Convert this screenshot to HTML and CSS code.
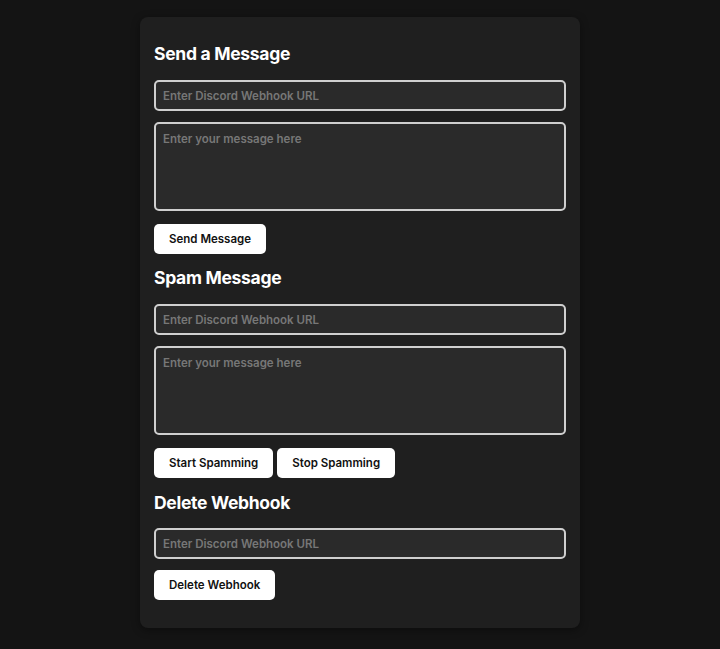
FILE: index.html
```html
<!DOCTYPE html>
<html lang="en">
<head>
<meta charset="utf-8">
<title>Discord Webhook Tool</title>
<link rel="stylesheet" href="styles.css">
</head>
<body>
<div class="card">
  <section class="section">
    <h2 class="title">Send a Message</h2>
    <input class="field" type="text" placeholder="Enter Discord Webhook URL">
    <textarea class="area" placeholder="Enter your message here"></textarea>
    <div class="actions">
      <button class="btn">Send Message</button>
    </div>
  </section>
  <section class="section">
    <h2 class="title">Spam Message</h2>
    <input class="field" type="text" placeholder="Enter Discord Webhook URL">
    <textarea class="area" placeholder="Enter your message here"></textarea>
    <div class="actions">
      <button class="btn">Start Spamming</button>
      <button class="btn">Stop Spamming</button>
    </div>
  </section>
  <section class="section">
    <h2 class="title">Delete Webhook</h2>
    <input class="field" type="text" placeholder="Enter Discord Webhook URL">
    <div class="actions">
      <button class="btn">Delete Webhook</button>
    </div>
  </section>
</div>
</body>
</html>
```
FILE: styles.css
```css
* { box-sizing: border-box; }
html, body { margin: 0; padding: 0; }
body {
  background: #141414;
  font-family: Inter, "Liberation Sans", sans-serif;
  color: #fff;
  min-height: 649px;
}
.card {
  width: 440px;
  margin: 17px auto 0;
  background: #1f1f1f;
  border-radius: 8px;
  padding: 13px 14px 28px;
  box-shadow: 0 2px 8px rgba(0,0,0,0.4);
}
.section { display: flex; flex-direction: column; }
.title {
  font-size: 17.5px;
  font-weight: 700;
  line-height: 22px;
  margin: 13px 0 15px;
  letter-spacing: -0.3px;
}
.section:last-child .title { margin-top: 14px; margin-bottom: 14px; }
.field, .area {
  width: 100%;
  background: #2a2a2a;
  border: 2px solid #cfcfcf;
  border-radius: 5px;
  color: #fff;
  font-family: Inter, "Liberation Sans", sans-serif;
  font-size: 11.5px;
  font-weight: 600;
  padding: 0 7px;
  outline: none;
  display: block;
}
.field { height: 31px; margin-bottom: 11px; }
.area { height: 89px; padding-top: 8px; resize: none; margin-bottom: 13px; }
.field::placeholder, .area::placeholder { color: #777; }
.actions { display: flex; gap: 4px; }
.btn {
  height: 30px;
  background: #fff;
  color: #111;
  border: none;
  border-radius: 5px;
  font-family: Inter, "Liberation Sans", sans-serif;
  font-size: 11.5px;
  font-weight: 600;
  padding: 0 15px;
}
```
